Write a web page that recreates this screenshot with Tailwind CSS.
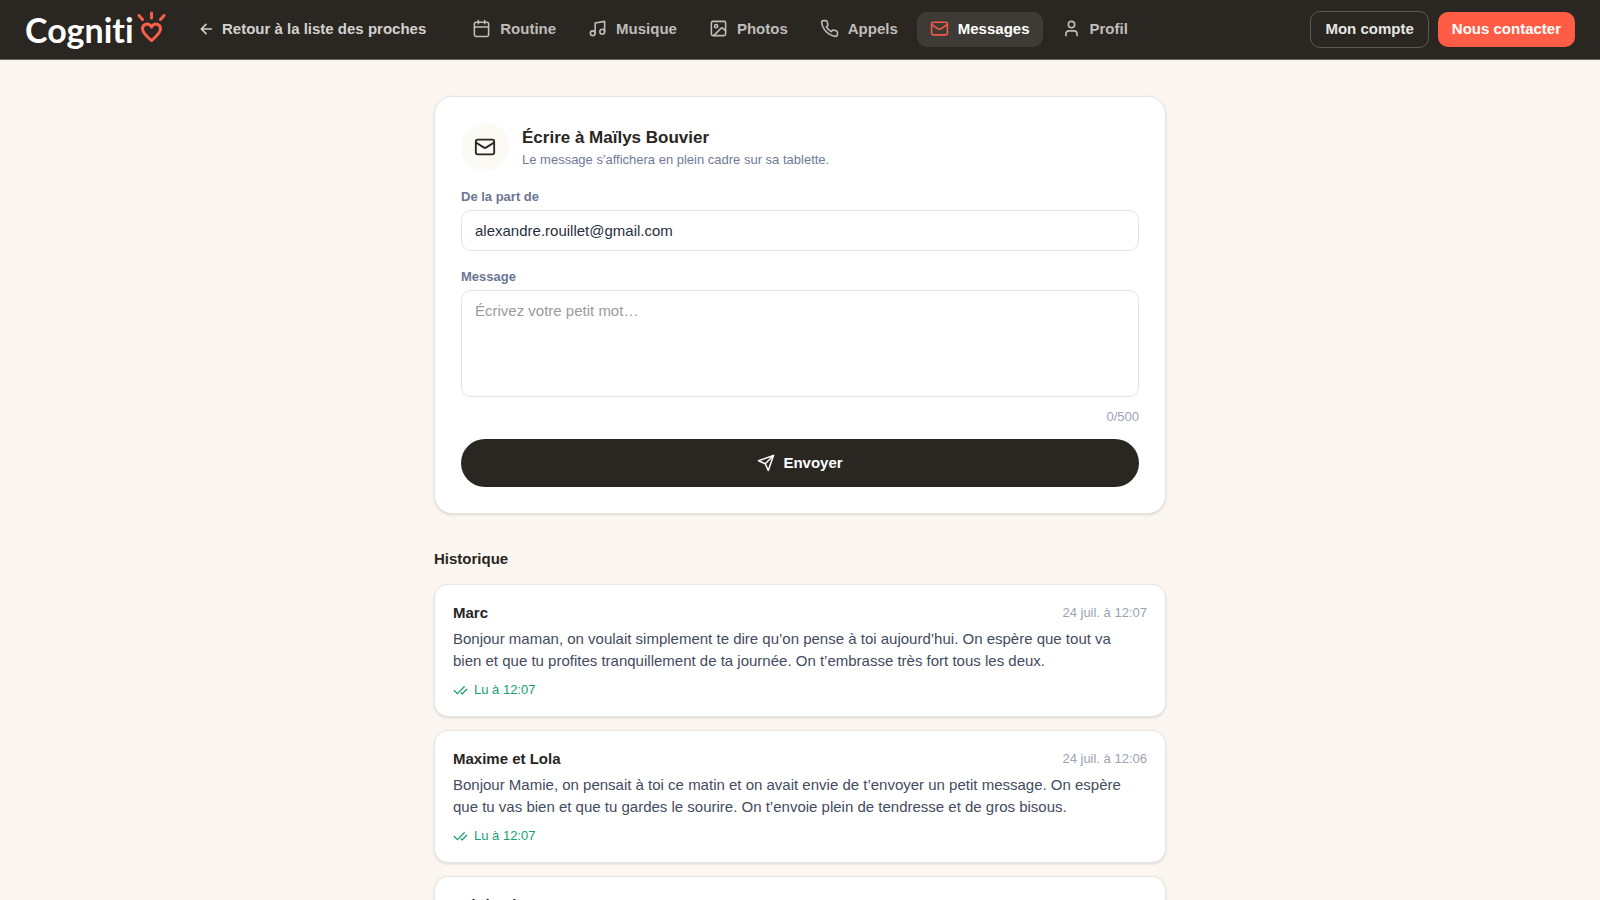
<!DOCTYPE html>
<html lang="fr">
<head>
<meta charset="utf-8">
<meta name="viewport" content="width=device-width, initial-scale=1">
<title>Cogniti – Messages</title>
<script src="https://cdn.jsdelivr.net/npm/@tailwindcss/browser@4"></script>
</head>
<body class="h-screen overflow-hidden bg-[#fbf7f0] font-['Liberation_Sans',Arial,sans-serif] text-[15px] leading-[22px] text-[#292522]">
<svg class="hidden" aria-hidden="true">
  <symbol id="mail" viewBox="0 0 24 24"><rect x="2" y="4" width="20" height="16" rx="2"/><path d="m22 7-8.970 5.700a1.940 1.940 0 0 1-2.060 0L2 7"/></symbol>
  <symbol id="checks" viewBox="0 0 24 24"><path d="M18 6 7 17l-5-5"/><path d="m22 10-7.500 7.500L13 16"/></symbol>
</svg>

<header class="flex h-[60px] items-center border-b border-[#6b6763] bg-[#2a2622] px-[25px] font-bold text-[#bfbdba]">
  <a href="#" aria-label="Cogniti" class="flex w-[142px] shrink-0 items-center text-white">
    <span class="font-[Lato,sans-serif] text-[34px] leading-[48px] font-bold [font-variant-ligatures:none]">Cogniti</span>
    <svg class="mb-[7px] ml-[3px] h-[31px] w-[29px] shrink-0" viewBox="0 0 29 31" fill="none" stroke="#f95f4b" stroke-width="3" stroke-linecap="round" stroke-linejoin="round" aria-hidden="true">
      <path d="M2 4.500 5.500 8.500M14.500 2V7M27 4.500 23.500 8.500"/>
      <path d="M14.500 29.500C11.500 27 5.500 22.500 5.500 17.800 5.500 12.300 12 11.500 14.500 16 17 11.500 23.500 12.300 23.500 17.800 23.500 22.500 17.500 27 14.500 29.500Z"/>
    </svg>
  </a>
  <a href="#" class="ml-[31px] flex shrink-0 items-center gap-2 pb-[2px] text-[#d4d2cf]">
    <svg class="size-4" viewBox="0 0 24 24" fill="none" stroke="currentColor" stroke-width="2.500" stroke-linecap="round" stroke-linejoin="round" aria-hidden="true"><path d="m12 19-7-7 7-7M20 12H5"/></svg>
    Retour à la liste des proches
  </a>
  <nav class="ml-[33px] flex items-center gap-[6px]">
    <a href="#" class="flex h-[35px] items-center gap-[9px] rounded-[10px] px-[13px] pb-[2px]">
      <svg class="size-[19px]" viewBox="0 0 24 24" fill="none" stroke="currentColor" stroke-width="2" stroke-linecap="round" stroke-linejoin="round" aria-hidden="true"><path d="M8 2v4M16 2v4M3 10h18"/><rect x="3" y="4" width="18" height="18" rx="2"/></svg>
      Routine
    </a>
    <a href="#" class="flex h-[35px] items-center gap-[9px] rounded-[10px] px-[13px] pb-[2px]">
      <svg class="size-[19px]" viewBox="0 0 24 24" fill="none" stroke="currentColor" stroke-width="2" stroke-linecap="round" stroke-linejoin="round" aria-hidden="true"><path d="M9 18V5l12-2v13"/><circle cx="6" cy="18" r="3"/><circle cx="18" cy="16" r="3"/></svg>
      Musique
    </a>
    <a href="#" class="flex h-[35px] items-center gap-[9px] rounded-[10px] px-[13px] pb-[2px]">
      <svg class="size-[19px]" viewBox="0 0 24 24" fill="none" stroke="currentColor" stroke-width="2" stroke-linecap="round" stroke-linejoin="round" aria-hidden="true"><rect x="3" y="3" width="18" height="18" rx="2"/><circle cx="9" cy="9" r="2"/><path d="m21 15-3.086-3.086a2 2 0 0 0-2.828 0L6 21"/></svg>
      Photos
    </a>
    <a href="#" class="flex h-[35px] items-center gap-[9px] rounded-[10px] px-[13px] pb-[2px]">
      <svg class="size-[19px]" viewBox="0 0 24 24" fill="none" stroke="currentColor" stroke-width="2" stroke-linecap="round" stroke-linejoin="round" aria-hidden="true"><path d="M22 16.920v3a2 2 0 0 1-2.180 2 19.790 19.790 0 0 1-8.630-3.070 19.500 19.500 0 0 1-6-6 19.790 19.790 0 0 1-3.070-8.670A2 2 0 0 1 4.110 2h3a2 2 0 0 1 2 1.720 12.840 12.840 0 0 0 .7 2.810 2 2 0 0 1-.45 2.110L8.090 9.910a16 16 0 0 0 6 6l1.270-1.270a2 2 0 0 1 2.110-.45 12.840 12.840 0 0 0 2.810.7A2 2 0 0 1 22 16.920z"/></svg>
      Appels
    </a>
    <a href="#" aria-current="page" class="flex h-[35px] items-center gap-[9px] rounded-[10px] bg-[#3e3b37] px-[13px] pb-[2px] text-white">
      <svg class="size-[19px] text-[#f05a47]" fill="none" stroke="currentColor" stroke-width="2" stroke-linecap="round" stroke-linejoin="round" aria-hidden="true"><use href="#mail"/></svg>
      Messages
    </a>
    <a href="#" class="flex h-[35px] items-center gap-[9px] rounded-[10px] px-[13px] pb-[2px]">
      <svg class="size-[19px]" viewBox="0 0 24 24" fill="none" stroke="currentColor" stroke-width="2" stroke-linecap="round" stroke-linejoin="round" aria-hidden="true"><path d="M19 21v-2a4 4 0 0 0-4-4H9a4 4 0 0 0-4 4v2"/><circle cx="12" cy="7" r="4"/></svg>
      Profil
    </a>
  </nav>
  <div class="ml-auto flex items-center gap-[9px]">
    <button type="button" class="h-[37px] rounded-[10px] border border-[#5b5855] px-[14px] pb-[2px] text-[#e8e6e3]">Mon compte</button>
    <button type="button" class="h-[35px] rounded-[10px] bg-[#ff5c45] px-[14px] pb-[2px] text-white">Nous contacter</button>
  </div>
</header>

<main class="mx-auto mt-9 max-w-[732px]">
  <form class="rounded-[18px] border border-[#e4e4e1] bg-white p-[26px] shadow-sm">
    <div class="flex items-center gap-[13px]">
      <div class="flex size-12 items-center justify-center rounded-full bg-[#fcfaf5]">
        <svg class="size-[22px]" fill="none" stroke="currentColor" stroke-width="2" stroke-linecap="round" stroke-linejoin="round" aria-hidden="true"><use href="#mail"/></svg>
      </div>
      <div class="pt-[2px]">
        <h1 class="text-[17px] leading-6 font-bold">Écrire à Maïlys Bouvier</h1>
        <p class="text-[13px] leading-5 text-[#717a99]">Le message s'affichera en plein cadre sur sa tablette.</p>
      </div>
    </div>
    <label for="from" class="mt-[17px] block text-[13px] leading-[18px] font-bold text-[#6b7694]">De la part de</label>
    <input id="from" type="text" value="alexandre.rouillet@gmail.com" class="mt-1 block h-[41px] w-full rounded-[10px] border border-[#e3e3e0] bg-white px-[13px] text-[#292f3d]">
    <label for="message" class="mt-[17px] block text-[13px] leading-[18px] font-bold text-[#6b7694]">Message</label>
    <textarea id="message" placeholder="Écrivez votre petit mot…" class="mt-1 block h-[107px] w-full resize-none rounded-[10px] border border-[#e3e3e0] bg-white px-[13px] py-[9px] placeholder:text-[#9b9b9b]"></textarea>
    <p class="mt-[11px] text-right text-[13px] leading-[18px] text-[#9aa3b2]">0/500</p>
    <button type="submit" class="mt-[13px] flex h-12 w-full items-center justify-center gap-2 rounded-full bg-[#2a2622] font-bold text-white">
      <svg class="size-[18px]" viewBox="0 0 24 24" fill="none" stroke="currentColor" stroke-width="2" stroke-linecap="round" stroke-linejoin="round" aria-hidden="true"><path d="M22 2 2 9l9 4 4 9z"/><path d="M22 2 11 13"/></svg>
      Envoyer
    </button>
  </form>

  <section class="mt-[34px]">
    <h2 class="font-bold">Historique</h2>
    <div class="mt-[14px] flex flex-col gap-[13px]">
      <article class="rounded-[14px] border border-[#e8e7e3] bg-white px-[18px] py-[17px] shadow-sm">
        <div class="flex items-center justify-between"><h3 class="font-bold">Marc</h3><time class="text-[13px] text-[#9aa3b2]">24 juil. à 12:07</time></div>
        <p class="mt-1 pr-3 text-[#444b5e]">Bonjour maman, on voulait simplement te dire qu’on pense à toi aujourd’hui. On espère que tout va bien et que tu profites tranquillement de ta journée. On t’embrasse très fort tous les deux.</p>
        <p class="mt-[9px] flex items-center gap-[6px] text-[13px] leading-[18px] text-[#159f72]"><svg class="size-[15px]" fill="none" stroke="currentColor" stroke-width="2" stroke-linecap="round" stroke-linejoin="round" aria-hidden="true"><use href="#checks"/></svg>Lu à 12:07</p>
      </article>
      <article class="rounded-[14px] border border-[#e8e7e3] bg-white px-[18px] py-[17px] shadow-sm">
        <div class="flex items-center justify-between"><h3 class="font-bold">Maxime et Lola</h3><time class="text-[13px] text-[#9aa3b2]">24 juil. à 12:06</time></div>
        <p class="mt-1 pr-3 text-[#444b5e]">Bonjour Mamie, on pensait à toi ce matin et on avait envie de t’envoyer un petit message. On espère que tu vas bien et que tu gardes le sourire. On t’envoie plein de tendresse et de gros bisous.</p>
        <p class="mt-[9px] flex items-center gap-[6px] text-[13px] leading-[18px] text-[#159f72]"><svg class="size-[15px]" fill="none" stroke="currentColor" stroke-width="2" stroke-linecap="round" stroke-linejoin="round" aria-hidden="true"><use href="#checks"/></svg>Lu à 12:07</p>
      </article>
      <article class="rounded-[14px] border border-[#e8e7e3] bg-white px-[18px] py-[17px] shadow-sm">
        <h3 class="font-bold">Stéphanie</h3>
      </article>
    </div>
  </section>
</main>
</body>
</html>
